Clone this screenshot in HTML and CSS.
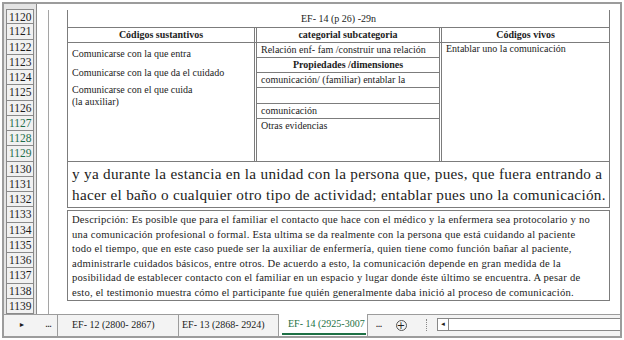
FILE: index.html
```html
<!DOCTYPE html>
<html lang="es">
<head>
    <meta charset="UTF-8">
    <title>EF- 14</title>
    <link rel="stylesheet" href="styles.css">
</head>
<body>
    <div class="window">
        <div class="sheet">
            <div class="rows">
                <div class="rn">1120</div>
                <div class="rn">1121</div>
                <div class="rn">1122</div>
                <div class="rn">1123</div>
                <div class="rn">1124</div>
                <div class="rn">1125</div>
                <div class="rn">1126</div>
                <div class="rn sel">1127</div>
                <div class="rn sel">1128</div>
                <div class="rn sel">1129</div>
                <div class="rn">1130</div>
                <div class="rn">1131</div>
                <div class="rn">1132</div>
                <div class="rn">1133</div>
                <div class="rn">1134</div>
                <div class="rn">1135</div>
                <div class="rn">1136</div>
                <div class="rn">1137</div>
                <div class="rn">1138</div>
                <div class="rn">1139</div>
            </div>
            <div class="grid">
                <div class="col-a">
                    <div class="pic">
                        <div class="codes">
                            <div class="title">EF- 14 (p 26) -29n</div>
                            <div class="head">
                                <div class="c1">Códigos sustantivos</div>
                                <div class="c2">categorial subcategoria</div>
                                <div class="c3">Códigos vivos</div>
                            </div>
                            <div class="body">
                                <div class="c1">
                                    <p class="p1">Comunicarse con la que entra</p>
                                    <p class="p2">Comunicarse con la que da el cuidado</p>
                                    <p class="p3">Comunicarse con el que cuida<br>(la auxiliar)</p>
                                </div>
                                <div class="c2">
                                    <div class="sub">Relación enf- fam /construir una relación</div>
                                    <div class="sub bold">Propiedades /dimensiones</div>
                                    <div class="sub">comunicación/ (familiar) entablar la</div>
                                    <div class="sub tall"></div>
                                    <div class="sub">comunicación</div>
                                    <div class="sub last">Otras evidencias</div>
                                </div>
                                <div class="c3">
                                    <p>Entablar uno la comunicación</p>
                                </div>
                            </div>
                        </div>
                        <div class="quote">
                            y ya durante la estancia en la unidad con la persona que, pues, que fuera entrando a<br>
                            hacer el baño o cualquier otro tipo de actividad; entablar pues uno la comunicación.
                        </div>
                        <div class="desc">
                            Descripción: Es posible que para el familiar el contacto que hace con el médico y la enfermera sea protocolario y no<br>
                            una comunicación profesional o formal. Esta ultima se da realmente con la persona que está cuidando al paciente<br>
                            todo el tiempo, que en este caso puede ser la auxiliar de enfermería, quien tiene como función bañar al paciente,<br>
                            administrarle cuidados básicos, entre otros. De acuerdo a esto, la comunicación depende en gran medida de la<br>
                            posibilidad de establecer contacto con el familiar en un espacio y lugar donde éste último se encuentra. A pesar de<br>
                            esto, el testimonio muestra cómo el participante fue quién generalmente daba inició al proceso de comunicación.
                        </div>
                    </div>
                </div>
            </div>
        </div>
        <div class="tabs">
            <div class="nav">&#9658;</div>
            <div class="more">...</div>
            <div class="tab t12">EF- 12 (2800- 2867)</div>
            <div class="tab t13">EF- 13 (2868- 2924)</div>
            <div class="tab active">EF- 14 (2925-3007</div>
            <div class="more m2">...</div>
            <div class="add"><span>+</span></div>
            <div class="dots"></div>
            <div class="scroll">
                <div class="sbtn">&#9668;</div>
            </div>
        </div>
    </div>
</body>
</html>
```

FILE: styles.css
```css
body{
    margin: 0;
    background-color: #fff;
    font-family: "Liberation Serif", "Times New Roman", serif;
    color: #1c1c1c;
}
* {
    box-sizing: border-box;
}
p{
    margin: 0;
}
.window{
    margin: 2px;
    width: 620px;
    height: 336px;
    border: 2px solid #9c9c9c;
    display: flex;
    flex-direction: column;
}
.sheet{
    flex: 1;
    display: flex;
    min-height: 0;
}

/* row numbers */
.rows{
    width: 33px;
    padding: 5px 2px 0 2px;
    background-color: #e4e4e4;
    border-right: 1px solid #8a8a8a;
    display: grid;
    grid-template-rows: repeat(20, 15.25px);
}
.rn{
    background-color: #f1f1f1;
    border: 1px solid #8a8a8a;
    border-top: none;
    font-size: 11.5px;
    line-height: 14px;
    padding-left: 2px;
}
.rn:first-child{
    border-top: 1px solid #8a8a8a;
}
.rn.sel{
    color: #1f6e4a;
}

.grid{
    flex: 1;
    padding: 6px 0 0 11px;
}
.col-a{
    height: 100%;
    border-left: 1px solid #a5a5a5;
    padding-left: 18px;
}
.pic{
    width: 543px;
}

/* codes table */
.codes{
    border-left: 1px solid #7c7c7c;
    border-right: 1px solid #7c7c7c;
    border-bottom: 1px solid #7c7c7c;
    font-size: 10px;
}
.title{
    height: 17px;
    line-height: 17px;
    text-align: center;
}
.head{
    display: flex;
    height: 16px;
    border-top: 1px solid #7c7c7c;
    border-bottom: 1px solid #7c7c7c;
    font-weight: bold;
    line-height: 14px;
    text-align: center;
}
.body{
    display: flex;
    height: 118px;
    line-height: 12px;
}
.c1{
    width: 189px;
    border-right: 3px double #7c7c7c;
}
.c2{
    width: 185px;
    border-right: 3px double #7c7c7c;
}
.c3{
    flex: 1;
}
.body .c1{
    padding: 0 4px;
}
.body .c3{
    padding: 0 4px;
}
.p1{
    margin-top: 5px !important;
}
.p2{
    margin-top: 7px !important;
}
.p3{
    margin-top: 5px !important;
}
.body .c2{
    display: flex;
    flex-direction: column;
}
.sub{
    height: 15px;
    border-bottom: 1px solid #7c7c7c;
    padding: 0 4px;
    line-height: 14px;
}
.sub.bold{
    font-weight: bold;
    text-align: center;
}
.sub.tall{
    height: 16px;
}
.sub.last{
    flex: 1;
    border-bottom: none;
}

.quote{
    border: 1px solid #7c7c7c;
    border-top: none;
    padding: 1px 4px 2px;
    font-size: 15.2px;
    letter-spacing: 0.3px;
    line-height: 21px;
    white-space: nowrap;
}
.desc{
    margin-top: 2px;
    border: 1px solid #7c7c7c;
    padding: 2px 4px 0;
    font-size: 10.6px;
    letter-spacing: 0.22px;
    line-height: 14.6px;
    height: 91px;
    white-space: nowrap;
}

/* sheet tabs */
.tabs{
    height: 22px;
    border-top: 1px solid #9c9c9c;
    background-color: #f3f3f3;
    display: flex;
    font-size: 10px;
    line-height: 20px;
}
.nav{
    width: 36px;
    text-align: center;
    font-size: 7px;
}
.more{
    width: 17px;
    text-align: center;
    font-weight: bold;
    font-size: 8px;
}
.tab{
    border-left: 1px solid #9c9c9c;
}
.t12{
    width: 121px;
    padding-left: 14px;
}
.t13{
    width: 100px;
    padding-left: 3px;
}
.tab.active{
    width: 90px;
    margin-top: -1px;
    height: 22px;
    padding-left: 9px;
    background-color: #fff;
    border-right: 1px solid #9c9c9c;
    color: #1e7145;
    position: relative;
}
.tab.active::after{
    content: "";
    position: absolute;
    left: 3px;
    right: 1px;
    bottom: 1px;
    height: 2px;
    background-color: #1e7145;
}
.m2{
    width: 22px;
}
.add{
    width: 22px;
    display: flex;
    justify-content: center;
    align-items: center;
}
.add span{
    width: 11px;
    height: 11px;
    border: 1px solid #555;
    border-radius: 50%;
    font-size: 10px;
    line-height: 9px;
    text-align: center;
    font-family: "DejaVu Sans", sans-serif;
}
.dots{
    width: 25px;
    position: relative;
}
.dots::before{
    content: "";
    position: absolute;
    left: 14px;
    top: 4px;
    height: 12px;
    border-left: 1px dotted #888;
}
.scroll{
    flex: 1;
    margin-top: 3px;
    height: 13px;
    border: 1px solid #888;
    border-right: none;
    background-color: #fff;
    display: flex;
}
.sbtn{
    width: 11px;
    border-right: 1px solid #888;
    font-size: 6px;
    line-height: 11px;
    text-align: center;
}
```
